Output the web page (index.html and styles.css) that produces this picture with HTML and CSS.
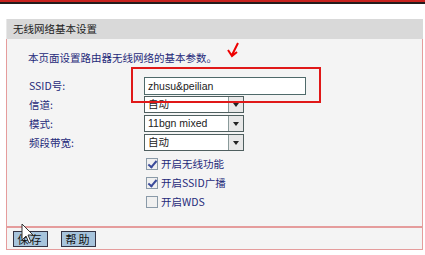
FILE: index.html
```
<html>
	<head>
		<meta http-equiv="Content-Type" content="text/html; charset=utf-8">
		<title>无线网络基本设置</title>
		<link rel="stylesheet" href="styles.css">
	</head>
	<body>
		<div class="topbar"></div>
		<div class="panel">
			<div class="panel_title">无线网络基本设置</div>
			<div class="panel_body">
				<p class="intro">本页面设置路由器无线网络的基本参数。</p>
				<div class="form_grid">
					<label>SSID号:</label>
					<input type="text" class="ssid" value="zhusu&amp;peilian"/>
					<label>信道:</label>
					<div class="select"><span>自动</span><i></i></div>
					<label>模式:</label>
					<div class="select"><span>11bgn mixed</span><i></i></div>
					<label>频段带宽:</label>
					<div class="select"><span>自动</span><i></i></div>
					<div></div>
					<div class="check checked"><b></b>开启无线功能</div>
					<div></div>
					<div class="check checked"><b></b>开启SSID广播</div>
					<div></div>
					<div class="check"><b></b>开启WDS</div>
				</div>
				<div class="mark_box"></div>
				<svg class="mark_arrow" width="14" height="16" viewBox="0 0 14 16">
					<path d="M11 1 L5 13 M1 8 L5 14 L10 10" stroke="#e00" stroke-width="2" fill="none"/>
				</svg>
			</div>
			<div class="panel_foot">
				<button>保存</button>
				<button>帮助</button>
				<svg class="cursor" width="14" height="22" viewBox="0 0 14 22">
					<path d="M1 1 L1 17 L5 13 L8 20 L10 19 L7 12 L12 12 Z" fill="#fff" stroke="#333" stroke-width="1"/>
				</svg>
			</div>
		</div>
	</body>
</html>
```
FILE: styles.css
```
*{
	margin:0;
	padding:0;
	box-sizing:border-box;
}

body{
	font-family:"Noto Sans CJK SC", "Liberation Sans", sans-serif;
	font-size:10.5px;
	background:#fff;
	width:425px;
	height:255px;
	overflow:hidden;
}

.topbar{
	height:4px;
	border-top:2px solid #c8221e;
	background:#241c1c;
	margin-bottom:15px;
}

.panel{
	margin:0 2px 0 6px;
	width:417px;
}

.panel_title{
	height:20px;
	line-height:20px;
	padding-left:6px;
	background:#d9d9d9;
	color:#222;
	border-left:1px solid #e8e8e8;
}

.panel_body{
	position:relative;
	background:#f4f4f4;
	border-left:1px solid #e59c9c;
	border-right:1px solid #e59c9c;
	padding:11px 0 16px 21px;
	height:187px;
}

.intro{
	color:#1f2a7a;
	margin-bottom:10px;
	line-height:16px;
}

.form_grid{
	display:grid;
	grid-template-columns:116px 200px;
	grid-auto-rows:19px;
	align-items:center;
	color:#1f2a7a;
}

.form_grid label{
	padding-left:1px;
}

.ssid{
	width:162px;
	height:18px;
	border:1px solid #4f6a6a;
	background:#fff;
	font:10.5px "Liberation Sans", sans-serif;
	color:#222;
	padding-left:3px;
}

.select{
	display:flex;
	width:100px;
	height:17px;
	border:1px solid #4f5f5f;
	background:#fff;
	color:#222;
	font-family:"Liberation Sans", "Noto Sans CJK SC", sans-serif;
}

.select span{
	flex:1;
	padding-left:3px;
	line-height:15px;
}

.select i{
	width:15px;
	border-left:1px solid #8a9a9a;
	background:#e8e8e8;
	position:relative;
}

.select i:after{
	content:"";
	position:absolute;
	left:4px;
	top:6px;
	border-left:3px solid transparent;
	border-right:3px solid transparent;
	border-top:4px solid #222;
}

.check{
	display:flex;
	align-items:center;
	padding-left:2px;
	height:22px;
	color:#1f2a7a;
}

.check b{
	width:12px;
	height:12px;
	border:1px solid #8a9aa8;
	background:#f0f0f0;
	margin-right:3px;
	position:relative;
}

.checked b:after{
	content:"";
	position:absolute;
	left:3px;
	top:0;
	width:3px;
	height:7px;
	border:solid #3a4a9a;
	border-width:0 2px 2px 0;
	transform:rotate(40deg);
}

.form_grid > .check{
	margin-top:4px;
}

.mark_box{
	position:absolute;
	left:124px;
	top:28px;
	width:190px;
	height:36px;
	border:2px solid #e01818;
}

.mark_arrow{
	position:absolute;
	left:220px;
	top:3px;
}

.panel_foot{
	position:relative;
	background:#f4f4f4;
	border:1px solid #e59c9c;
	border-top:2px solid #e59c9c;
	height:24px;
	padding:3px 0 0 6px;
	display:flex;
	gap:13px;
}

.panel_foot button{
	width:35px;
	height:16px;
	background:#a7c4dc;
	border:1px solid #334;
	font:11px "Noto Sans CJK SC", sans-serif;
	line-height:14px;
	color:#111;
	letter-spacing:2px;
}

.cursor{
	position:absolute;
	left:14px;
	top:-5px;
}
```
